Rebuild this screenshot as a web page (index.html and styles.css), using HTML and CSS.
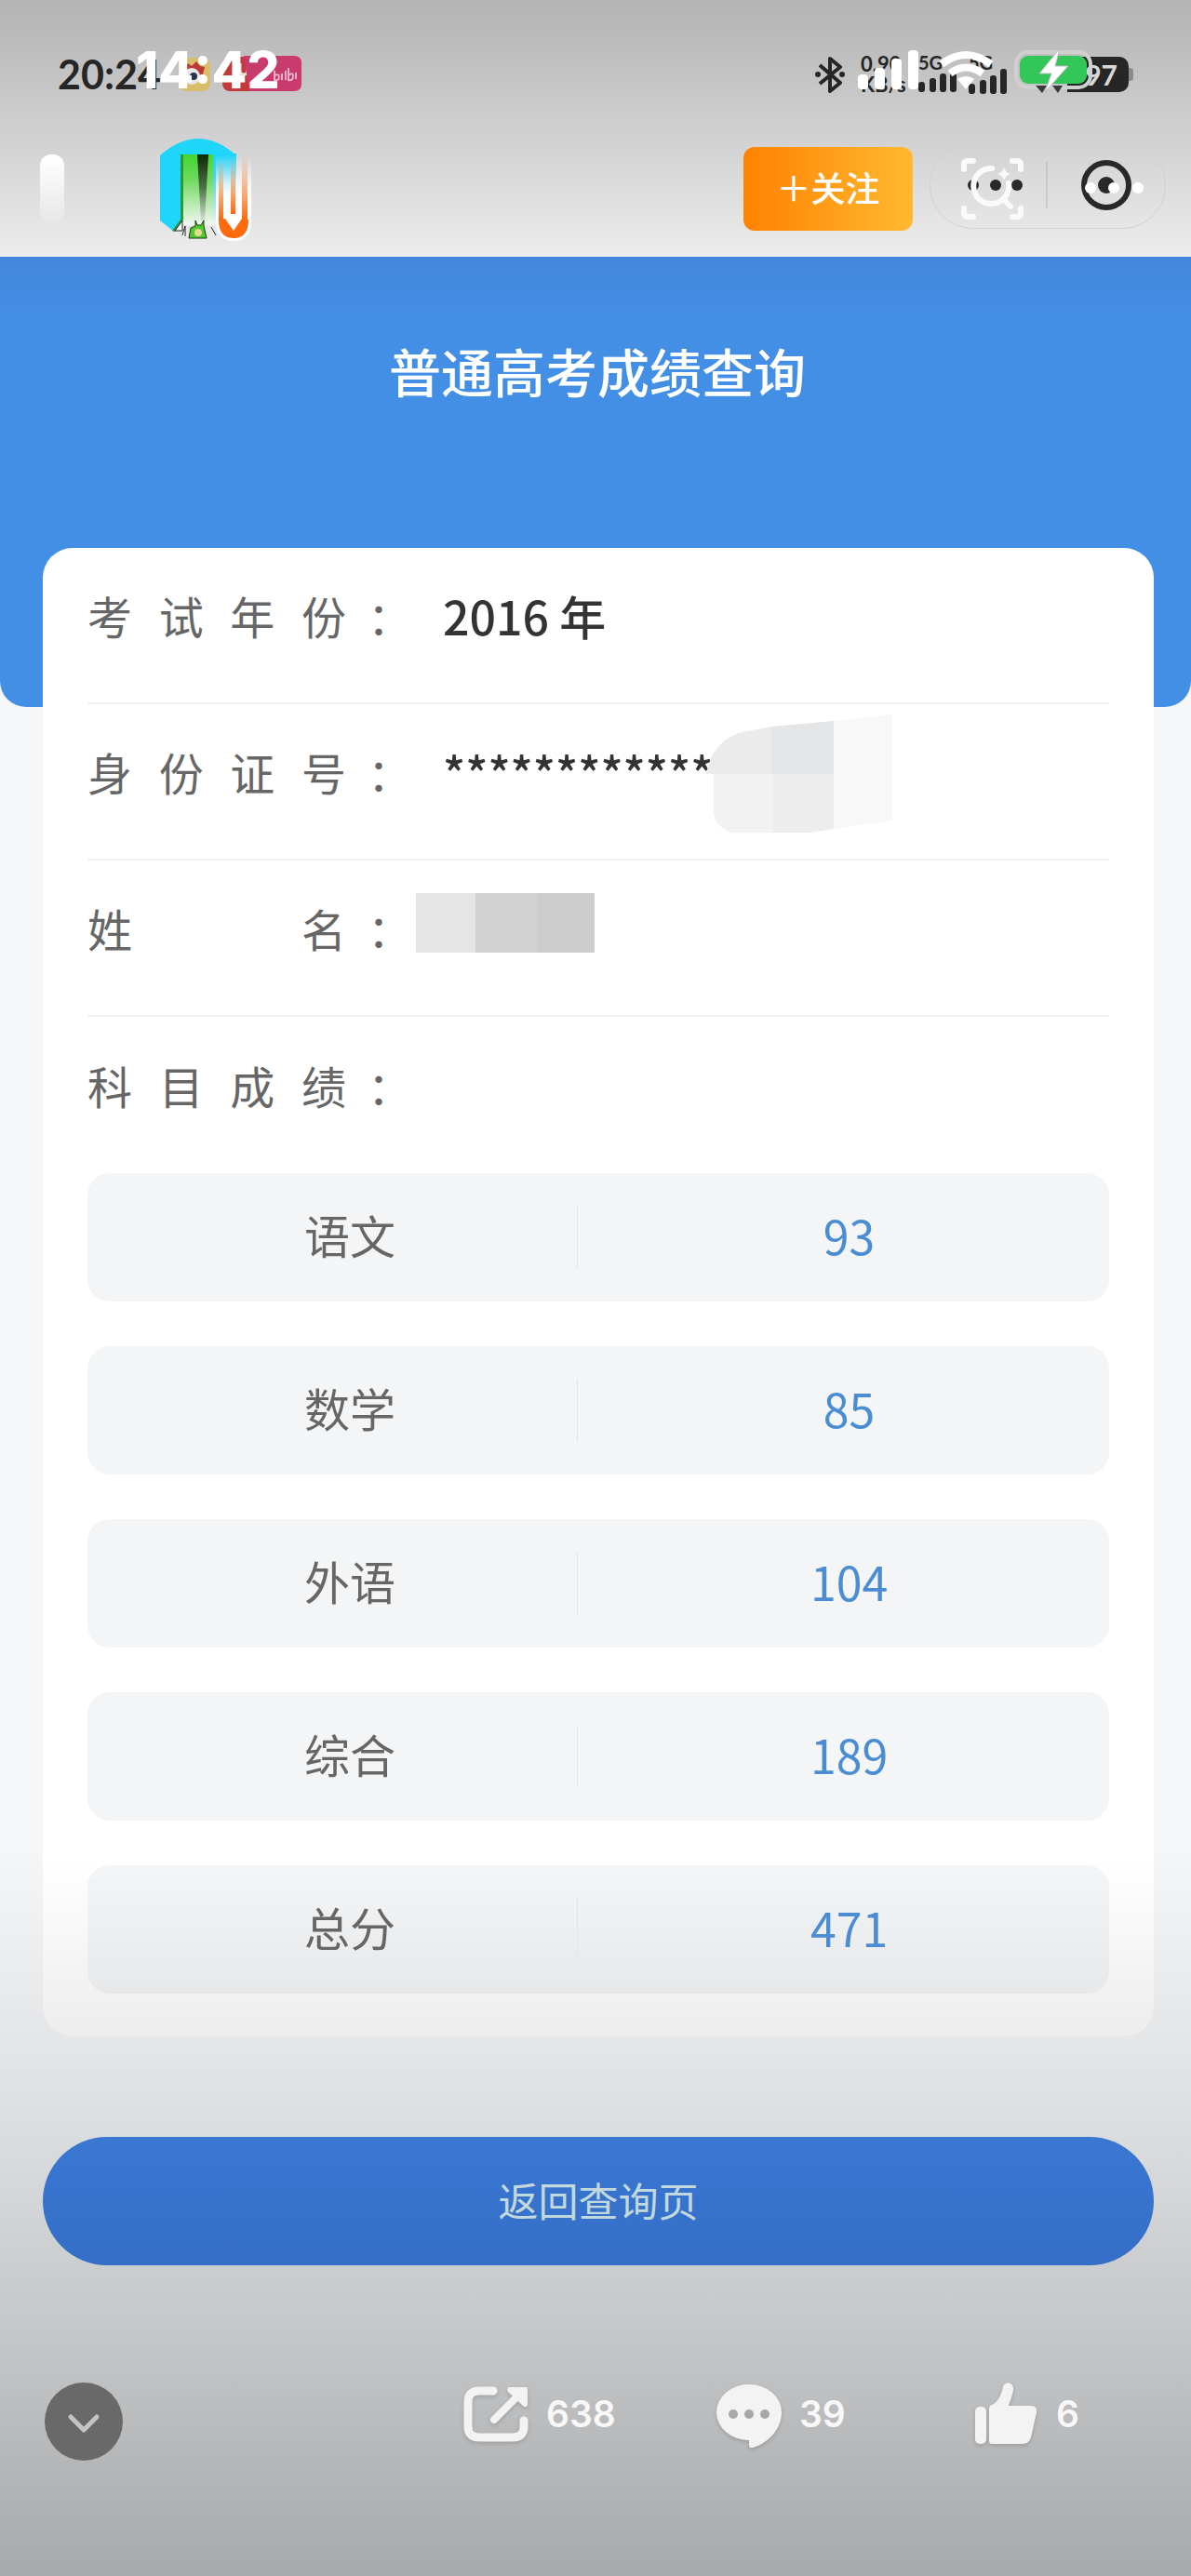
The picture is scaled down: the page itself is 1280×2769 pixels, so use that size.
FILE: index.html
```html
<!DOCTYPE html>
<html lang="zh-CN">
<head>
    <meta charset="UTF-8">
    <meta name="viewport" content="width=device-width, initial-scale=1.0">
    <title>普通高考成绩查询</title>
    <link rel="stylesheet" href="styles.css">
</head>
<body>
<div class="page">
    <header class="top">
        <!-- Status bar of the shared screen -->
        <div class="status status-back">
            <span class="back-time">20:24</span>
            <svg class="apps" width="132" height="40" viewBox="0 0 132 40">
                <rect x="0" y="2" width="34" height="36" rx="8" fill="#d8bd6b"/>
                <path d="M6 14l4-6 4 3 5-5 4 5 5 1-2 8-20 4z" fill="#b93a35"/>
                <circle cx="14" cy="22" r="9" fill="#e8e8e8"/>
                <circle cx="16" cy="22" r="4" fill="#26354a"/>
                <rect x="47" y="1" width="45" height="37" rx="8" fill="#c43a3a"/>
                <path d="M66 8v8q0 4 4 4t4-4V8" fill="none" stroke="#ecdcdc" stroke-width="3"/>
                <path d="M70 0h54q8 0 8 8v22q0 8-8 8H76z" fill="#c93a6d"/>
                <path d="M103 16v10q5 1 5-3t-5-2M111 19v7M115 16v10M118 13v13q5 1 5-4t-5-1M126 18v7" fill="none" stroke="#eab0c6" stroke-width="2"/>
            </svg>
            <svg class="bluetooth" width="34" height="40" viewBox="0 0 34 40">
                <path d="M6 10l22 19-11 9V3l11 9L6 30" fill="none" stroke="#262626" stroke-width="4" stroke-linejoin="round"/>
                <circle cx="4" cy="20" r="3" fill="#262626"/>
                <circle cx="30" cy="20" r="3" fill="#262626"/>
            </svg>
            <span class="speed">0.90<br>KB/s</span>
            <span class="cell">5G
                <svg width="42" height="22" viewBox="0 0 42 22" fill="#262626"><rect x="0" y="10" width="7" height="11" rx="3"/><rect x="12" y="6" width="7" height="15" rx="3"/><rect x="23" y="1" width="7" height="20" rx="3"/><rect x="34" y="0" width="7" height="21" rx="3"/></svg>
            </span>
            <span class="cell">5G
                <svg width="42" height="28" viewBox="0 0 42 28" fill="#262626"><rect x="0" y="16" width="7" height="11" rx="3"/><rect x="12" y="12" width="7" height="15" rx="3"/><rect x="23" y="7" width="7" height="20" rx="3"/><rect x="34" y="0" width="7" height="27" rx="3"/></svg>
            </span>
            <span class="back-battery">97</span>
        </div>
        <!-- Status bar of the device -->
        <div class="status status-front">
            <span class="front-time">14:42</span>
            <svg class="front-icons" width="256" height="50" viewBox="920 50 256 50">
                <g fill="#fff">
                    <rect x="922" y="80" width="11" height="16" rx="4"/>
                    <rect x="940" y="73" width="11" height="23" rx="4"/>
                    <rect x="958" y="63" width="11" height="33" rx="4"/>
                    <rect x="976" y="54" width="11" height="42" rx="4"/>
                    <path d="M1029 85q9-6 18 0l-9 11z"/>
                </g>
                <path d="M1012 69q26-20 53 0M1021 79q17-13 35 0" fill="none" stroke="#fff" stroke-width="8"/>
                <rect x="1092" y="56" width="80" height="38" rx="13" fill="none" stroke="#d0d0d0" stroke-width="4"/>
                <rect x="1096" y="60" width="72" height="30" rx="9" fill="#33c759"/>
                <path d="M1113 92h12l-5 8zM1131 92h11l-5 8z" fill="#3a3a3a"/>
                <path d="M1139 52l-22 27h13l-7 20 25-28h-14z" fill="#fff" stroke="#b9bcb9" stroke-width="1"/>
            </svg>
        </div>

        <!-- Account bar -->
        <div class="account">
            <span class="back-mark"></span>
            <svg class="avatar" width="104" height="112" viewBox="170 148 104 112">
                <defs>
                    <linearGradient id="greenFade" x1="0" y1="0" x2="0" y2="1"><stop offset="0" stop-color="#43d62f"/><stop offset="0.35" stop-color="#6fd95f"/><stop offset="1" stop-color="#f4f8f2"/></linearGradient>
                    <linearGradient id="darkFade" x1="0" y1="0" x2="0" y2="1"><stop offset="0" stop-color="#0f2708"/><stop offset="0.5" stop-color="#4d7245"/><stop offset="1" stop-color="#d9e3d5"/></linearGradient>
                    <linearGradient id="cyanFade" x1="0" y1="0" x2="0" y2="1"><stop offset="0" stop-color="#1fd5fa"/><stop offset="0.3" stop-color="#45cfee"/><stop offset="1" stop-color="#e8edee"/></linearGradient>
                    <linearGradient id="whiteFade" x1="0" y1="0" x2="0" y2="1"><stop offset="0" stop-color="#fff" stop-opacity="0"/><stop offset="0.6" stop-color="#fff"/></linearGradient>
                    <linearGradient id="orangeFade" x1="0" y1="0" x2="0" y2="1"><stop offset="0" stop-color="#f47a2a" stop-opacity="0"/><stop offset="1" stop-color="#f9660a"/></linearGradient>
                </defs>
                <path d="M172 167q41-36 82 0v24h-60v46l-7 12-15-12z" fill="#1fd5fa"/>
                <rect x="194" y="166" width="38" height="76" fill="url(#greenFade)"/>
                <path d="M194 166h3v70l-9 13-3-1 9-12z" fill="#2b9a35"/>
                <path d="M212 166h12l-4 72h-4z" fill="url(#darkFade)"/>
                <rect x="229" y="165" width="25" height="73" fill="url(#cyanFade)"/>
                <rect x="232" y="167" width="38" height="72" fill="url(#whiteFade)"/>
                <rect x="235" y="170" width="5" height="68" fill="url(#orangeFade)"/>
                <rect x="248" y="170" width="5" height="60" fill="url(#orangeFade)"/>
                <rect x="260" y="166" width="6" height="72" fill="url(#orangeFade)"/>
                <path d="M232 236q0 23 19 23t19-23z" fill="#fff"/>
                <path d="M235 236q0 20 16 20t16-20l-7-1-9 13-9-13z" fill="#ff6a0c"/>
                <path d="M188 248l8-11v11zM196 253l3-10v11M227 244l5 9" fill="#fff" stroke="#222" stroke-width="1"/>
                <path d="M203 256l2-11 5-2v-6l2 5h4l3-5v6l3 13z" fill="#54c832" stroke="#183d10" stroke-width="1"/>
                <circle cx="213" cy="250" r="4" fill="#e9d98b"/>
            </svg>
            <button class="follow" type="button">＋关注</button>
            <div class="capsule">
                <svg width="252" height="92" viewBox="1001 153 252 92">
                    <g fill="#292929"><circle cx="1047" cy="199" r="6"/><circle cx="1071" cy="199" r="6"/><circle cx="1094" cy="199" r="6"/><circle cx="1190" cy="199" r="9"/></g>
                    <circle cx="1190" cy="199" r="24" fill="none" stroke="#292929" stroke-width="6"/>
                    <path d="M1126 174v50" stroke="#b5b5b5" stroke-width="1"/>
                    <g fill="none" stroke="#fafafa" stroke-width="6" stroke-linecap="round" stroke-linejoin="round">
                        <path d="M1037 182v-5q0-4 4-4h6M1089 173h5q4 0 4 4v5M1037 224v5q0 4 4 4h6M1089 233h5q4 0 4-4v-5"/>
                        <path d="M1067 181a19 19 0 1 0 18 16M1079 214l8 8"/>
                    </g>
                    <path d="M1080 180q2 6 7 7-5 1-7 7-2-6-7-7 5-1 7-7z" fill="#fafafa"/>
                    <g fill="#fff"><circle cx="1173" cy="202" r="6"/><circle cx="1198" cy="202" r="6"/><circle cx="1224" cy="202" r="6"/></g>
                </svg>
            </div>
        </div>
    </header>

    <div class="hero">
        <h1>普通高考成绩查询</h1>
    </div>

    <main>
        <section class="card">
            <dl class="info">
                <div class="info-row">
                    <dt>考试年份</dt>
                    <dd>2016 年</dd>
                </div>
                <div class="info-row">
                    <dt>身份证号</dt>
                    <dd>
                        <span class="masked">************</span>
                        <svg class="mosaic-id" width="202" height="128" viewBox="758 768 202 128">
                            <path d="M760 832q6-35 38-45l32-6v51z" fill="#ebebec"/>
                            <path d="M830 781l67-6v57h-67z" fill="#e4e5e7"/>
                            <path d="M768 832h64v63h-46q-18-8-18-23z" fill="#f2f2f2"/>
                            <path d="M832 832h65v59l-24 4h-41z" fill="#ecedec"/>
                            <path d="M897 775l63-7v114l-63 9z" fill="#f8f8f8"/>
                        </svg>
                    </dd>
                </div>
                <div class="info-row">
                    <dt>姓名</dt>
                    <dd><span class="mosaic-name"></span></dd>
                </div>
                <div class="info-row">
                    <dt>科目成绩</dt>
                    <dd></dd>
                </div>
            </dl>

            <table class="scores">
                <tbody>
                    <tr><th scope="row">语文</th><td>93</td></tr>
                    <tr><th scope="row">数学</th><td>85</td></tr>
                    <tr><th scope="row">外语</th><td>104</td></tr>
                    <tr><th scope="row">综合</th><td>189</td></tr>
                    <tr><th scope="row">总分</th><td>471</td></tr>
                </tbody>
            </table>
        </section>
        <button class="return" type="button">返回查询页</button>
    </main>

    <!-- Bottom actions -->
    <footer class="bottom">
        <button class="collapse" type="button" aria-label="收起">
            <svg width="36" height="24" viewBox="0 0 36 24"><path d="M4 4l14 14L32 4" fill="none" stroke="#c4c4c4" stroke-width="5" stroke-linecap="round" stroke-linejoin="round"/></svg>
        </button>
        <div class="actions">
            <button class="action" type="button" aria-label="分享 638">
                <svg width="72" height="72" viewBox="0 0 72 72">
                    <path d="M33 11H18Q6 11 6 23v26q0 12 12 12h36q12 0 12-12v-6" fill="none" stroke="#f3f3f3" stroke-width="9" stroke-linecap="round"/>
                    <path d="M34 42l24-24" stroke="#f3f3f3" stroke-width="8" stroke-linecap="round"/>
                    <path d="M50 7h18q2 0 2 2v17q-2 4-5 1L49 12q-2-3 1-5z" fill="#f3f3f3"/>
                </svg>
                <span>638</span>
            </button>
            <button class="action" type="button" aria-label="评论 39">
                <svg width="72" height="72" viewBox="0 0 72 72">
                    <path d="M36 4a35 30 0 0 1 35 30c0 18-14 33-31 38q-4 1-4-3v-5A35 30 0 0 1 36 4z" fill="#f3f3f3"/>
                    <g fill="#a8a8a8"><circle cx="19" cy="36" r="5"/><circle cx="36" cy="36" r="5"/><circle cx="53" cy="36" r="5"/></g>
                </svg>
                <span>39</span>
            </button>
            <button class="action" type="button" aria-label="点赞 6">
                <svg width="72" height="72" viewBox="0 0 72 72" fill="#f3f3f3">
                    <rect x="3" y="28" width="12" height="40" rx="5"/>
                    <path d="M18 30q0-3 3-4c7-3 10-11 12-19 1-7 12-6 11 3-1 7-4 12-5 17h24q7 0 6 7l-6 27q-2 7-9 7H21q-3 0-3-3z"/>
                </svg>
                <span>6</span>
            </button>
        </div>
    </footer>
</div>
</body>
</html>
```
FILE: styles.css
```css
* {
    box-sizing: border-box;
}
body {
    margin: 0;
    font-family: "Noto Sans CJK SC", "Noto Sans", sans-serif;
    background-color: #f4f6f8;
    color: #333;
}
button {
    border: none;
    padding: 0;
    font-family: inherit;
    cursor: pointer;
}
.page {
    position: relative;
    min-height: 100vh;
    background: linear-gradient(to top, #a8a9aa 0, #c6c7c9 270px, #dfe1e2 520px, #f4f6f8 780px);
}

/* Header */
.top {
    position: relative;
    height: 276px;
    padding-top: 148px;
    background: linear-gradient(#b3b3b3, #cfcfcf 50%, #ededed);
}
.status {
    position: absolute;
    top: 50px;
    left: 0;
    right: 0;
    height: 50px;
    display: flex;
    align-items: center;
    line-height: 50px;
}
.status-back {
    padding: 10px 62px 0;
    height: 60px;
    top: 45px;
    color: #262626;
}
.back-time {
    width: 130px;
    font-family: Lato, sans-serif;
    font-size: 43px;
    font-weight: bold;
}
.bluetooth {
    margin-left: auto;
}
.speed {
    width: 50px;
    margin-left: 16px;
    font-family: Lato, sans-serif;
    font-size: 22px;
    font-weight: bold;
    line-height: 22px;
}
.cell {
    display: flex;
    flex-direction: column;
    justify-content: space-between;
    width: 42px;
    height: 40px;
    margin-left: 12px;
    font-family: Lato, sans-serif;
    font-size: 20px;
    font-weight: bold;
    line-height: 14px;
}
.cell svg {
    flex: none;
}
.back-battery {
    position: relative;
    width: 126px;
    height: 38px;
    margin: 0 5px 0 4px;
    padding-right: 12px;
    border-radius: 10px;
    background: linear-gradient(to right, transparent 60px, #262626 60px);
    color: #d8d8d8;
    font-family: Lato, sans-serif;
    font-size: 30px;
    font-weight: bold;
    line-height: 38px;
    text-align: right;
}
.back-battery::after {
    content: "";
    position: absolute;
    top: 12px;
    left: 100%;
    width: 5px;
    height: 14px;
    border-radius: 0 4px 4px 0;
    background-color: #8a8a8a;
}
.status-front {
    padding: 0 104px 0 146px;
    justify-content: space-between;
    color: #fff;
}
.front-time {
    font-family: Inter, sans-serif;
    font-size: 55px;
    font-weight: 800;
}
.account {
    display: flex;
    align-items: center;
    height: 112px;
    padding: 0 27px 0 43px;
}
.back-mark {
    width: 26px;
    height: 76px;
    border-radius: 12px;
    background: linear-gradient(#fff, #e6e6e6);
}
.avatar {
    margin-left: 101px;
}
.follow {
    width: 182px;
    height: 90px;
    margin-left: auto;
    padding-bottom: 4px;
    margin-bottom: 2px;
    border-radius: 12px;
    background: linear-gradient(to right, #ff8200, #ffb931);
    color: #fff;
    font-size: 37px;
    font-weight: 500;
}
.capsule {
    height: 94px;
    margin-left: 18px;
    margin-bottom: 10px;
    border: 1px solid #d2d2d2;
    border-radius: 47px;
}
.capsule svg {
    display: block;
}

/* Title area */
.hero {
    height: 484px;
    padding: 82px 0 0 4px;
    border-radius: 0 0 28px 28px;
    background: linear-gradient(#4287dd, #448fe6 70px);
}
.hero h1 {
    margin: 0;
    color: #fff;
    font-size: 56px;
    font-weight: 500;
    line-height: 80px;
    text-align: center;
}

/* Result card */
main {
    padding: 0 40px 0 46px;
}
.card {
    margin-top: -171px;
    padding: 0 48px 46px;
    border-radius: 32px;
    background: linear-gradient(to top, #ededed, #fff 190px);
    position: relative;
}
.info {
    margin: 0;
}
.info-row {
    display: flex;
    align-items: center;
    height: 168px;
    padding-bottom: 22px;
    border-bottom: 2px solid #f2f2f3;
}
.info-row:last-child {
    border-bottom: none;
}
.info dt {
    position: relative;
    width: 278px;
    color: #666;
    font-size: 48px;
    line-height: 72px;
    text-align: justify;
    text-align-last: justify;
}
.info dt::after {
    content: "：";
    position: absolute;
    left: 100%;
    margin-left: 23px;
}
.info dd {
    position: relative;
    margin: 0 0 0 104px;
    font-size: 50px;
    font-weight: 500;
    line-height: 72px;
}
.mosaic-id {
    position: absolute;
    top: -25px;
    left: 281px;
}
.mosaic-name {
    display: block;
    width: 192px;
    height: 64px;
    margin: -10px 0 0 -29px;
    background: linear-gradient(to right, #e5e5e5 64px, #d2d2d2 64px, #d2d2d2 130px, #cdcdcd 130px);
}

/* Scores */
.scores,
.scores tbody {
    display: flex;
    flex-direction: column;
    gap: 48px;
}
.scores tr {
    display: flex;
    align-items: center;
    height: 138px;
    border-radius: 24px;
    background-color: #f4f5f7;
}
.scores tr:last-child {
    background: linear-gradient(#f4f5f6, #e7e8e9);
}
.scores th {
    width: 48%;
    padding: 0 0 6px 38px;
    border-right: 1px solid #e2e4e6;
    color: #666;
    font-size: 49px;
    font-weight: normal;
    line-height: 60px;
}
.scores td {
    flex: 1;
    padding: 0 0 6px 12px;
    color: #4a8dd2;
    font-size: 50px;
    line-height: 60px;
    text-align: center;
}
.return {
    display: block;
    width: 100%;
    height: 138px;
    margin-top: 108px;
    padding-bottom: 4px;
    border-radius: 69px;
    background: linear-gradient(#3a78d4, #346ec6);
    color: #c3d8dc;
    font-size: 43px;
}

/* Footer */
.bottom {
    display: flex;
    align-items: center;
    padding: 124px 120px 120px 48px;
}
.collapse {
    display: flex;
    align-items: center;
    justify-content: center;
    width: 84px;
    height: 84px;
    padding-top: 6px;
    border-radius: 50%;
    background-color: #696969;
}
.actions {
    display: grid;
    grid-template-columns: 272px 276px auto;
    margin-left: auto;
    padding-bottom: 16px;
}
.action {
    display: flex;
    align-items: center;
    gap: 18px;
    background: none;
    color: #f8f8f8;
    font-family: Inter, sans-serif;
    font-size: 39px;
    font-weight: 600;
    line-height: 72px;
}
.action svg {
    filter: drop-shadow(0 2px 2px rgba(0, 0, 0, 0.15));
}
```
